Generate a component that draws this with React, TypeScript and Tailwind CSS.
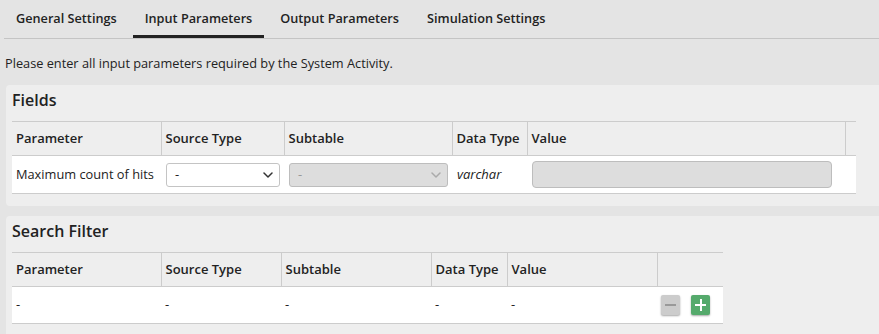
import React from "react";

const Chevron = ({ color }: { color: string }) => (
  <svg width="10" height="6" viewBox="0 0 10 6" fill="none">
    <path d="M1 1l4 4 4-4" stroke={color} strokeWidth="1.5" strokeLinecap="round" strokeLinejoin="round" />
  </svg>
);

export default function App() {
  const tabs = ["General Settings", "Input Parameters", "Output Parameters", "Simulation Settings"];
  return (
    <div className="w-[879px] h-[334px] overflow-hidden bg-[#e4e4e4] text-[#222] [font-family:'Open_Sans',sans-serif]">
      <div className="ml-[4px] flex gap-[4px] border-b border-[#c4c4c4] h-[39px]">
        {tabs.map((t, i) => (
          <div
            key={t}
            className={`h-[38px] px-[12px] flex items-center text-[12.7px] font-semibold border-b-[3px] ${
              i === 1 ? "border-[#222]" : "border-transparent"
            }`}
          >
            <span className="pt-[3px]">{t}</span>
          </div>
        ))}
      </div>
      <div className="pl-[5px] pt-[15px] pb-[13px] text-[12.75px] leading-[18px]">
        Please enter all input parameters required by the System Activity.
      </div>

      <div className="ml-[6px] bg-[#eeeeee] rounded-l-[4px] pl-[6px] pt-[4px] pb-[12px]">
        <div className="text-[16px] font-semibold leading-[22px] pb-[10px]">Fields</div>
        <table className="border-collapse text-[13px] w-[844px] table-fixed">
          <colgroup>
            <col className="w-[149px]" />
            <col className="w-[123px]" />
            <col className="w-[168px]" />
            <col className="w-[75px]" />
            <col className="w-[318px]" />
            <col className="w-[11px]" />
          </colgroup>
          <thead>
            <tr className="h-[34px] border-t border-b border-[#cccccc]">
              <th className="text-left font-semibold px-[4px]">Parameter</th>
              <th className="text-left font-semibold px-[4px] border-l border-[#cccccc]">Source Type</th>
              <th className="text-left font-semibold px-[4px] border-l border-[#cccccc]">Subtable</th>
              <th className="text-left font-semibold px-[4px] border-l border-[#cccccc]">Data Type</th>
              <th className="text-left font-semibold px-[4px] border-l border-[#cccccc]">Value</th>
              <th className="border-l border-[#cccccc]"></th>
            </tr>
          </thead>
          <tbody>
            <tr className="h-[38px] bg-white border-b border-[#cccccc]">
              <td className="px-[4px] whitespace-nowrap text-[12.8px]">Maximum count of hits</td>
              <td className="px-[4px]">
                <div className="ml-[1px] w-[114px] h-[24px] bg-white border border-[#c4c4c4] rounded-[3px] flex items-center justify-between pl-[8px] pr-[6px]">
                  <span>-</span>
                  <Chevron color="#333" />
                </div>
              </td>
              <td className="px-[4px]">
                <div className="ml-[1px] w-[159px] h-[24px] bg-[#dddddd] border border-[#bdbdbd] rounded-[3px] flex items-center justify-between pl-[8px] pr-[6px] text-[#999]">
                  <span>-</span>
                  <Chevron color="#aaa" />
                </div>
              </td>
              <td className="px-[4px] pl-[5px] italic">varchar</td>
              <td className="px-[4px]">
                <div className="ml-[1px] w-[300px] h-[27px] bg-[#dddddd] border border-[#bdbdbd] rounded-[4px]"></div>
              </td>
              <td></td>
            </tr>
          </tbody>
        </table>
      </div>

      <div className="mt-[10px] ml-[6px] bg-[#eeeeee] rounded-l-[4px] pl-[6px] pt-[4px] pb-[13px]">
        <div className="text-[16px] font-semibold leading-[22px] pb-[10px]">Search Filter</div>
        <table className="border-collapse text-[13px] w-[711px] table-fixed">
          <colgroup>
            <col className="w-[149px]" />
            <col className="w-[120px]" />
            <col className="w-[150px]" />
            <col className="w-[76px]" />
            <col className="w-[150px]" />
            <col className="w-[66px]" />
          </colgroup>
          <thead>
            <tr className="h-[34px] border-t border-b border-[#cccccc]">
              <th className="text-left font-semibold px-[4px]">Parameter</th>
              <th className="text-left font-semibold px-[4px] border-l border-[#cccccc]">Source Type</th>
              <th className="text-left font-semibold px-[4px] border-l border-[#cccccc]">Subtable</th>
              <th className="text-left font-semibold px-[4px] border-l border-[#cccccc]">Data Type</th>
              <th className="text-left font-semibold px-[4px] border-l border-[#cccccc]">Value</th>
              <th className="border-l border-[#cccccc]"></th>
            </tr>
          </thead>
          <tbody>
            <tr className="h-[37px] bg-white border-b border-[#cccccc]">
              <td className="px-[4px]">-</td>
              <td className="px-[4px]">-</td>
              <td className="px-[4px]">-</td>
              <td className="px-[4px]">-</td>
              <td className="px-[4px]">-</td>
              <td className="pl-[4px]">
                <div className="flex items-center gap-[11px]">
                  <div className="w-[19px] h-[20px] rounded-[2px] bg-[#cccccc] shadow-[0_1px_2px_rgba(0,0,0,0.35)] flex items-center justify-center">
                    <div className="w-[11px] h-[2px] bg-[#999]"></div>
                  </div>
                  <div className="w-[19px] h-[20px] rounded-[2px] bg-[#55aa6c] shadow-[0_1px_2px_rgba(0,0,0,0.35)] flex items-center justify-center relative">
                    <div className="w-[11px] h-[2px] bg-white"></div>
                    <div className="absolute w-[2px] h-[12px] bg-white"></div>
                  </div>
                </div>
              </td>
            </tr>
          </tbody>
        </table>
      </div>
    </div>
  );
}
